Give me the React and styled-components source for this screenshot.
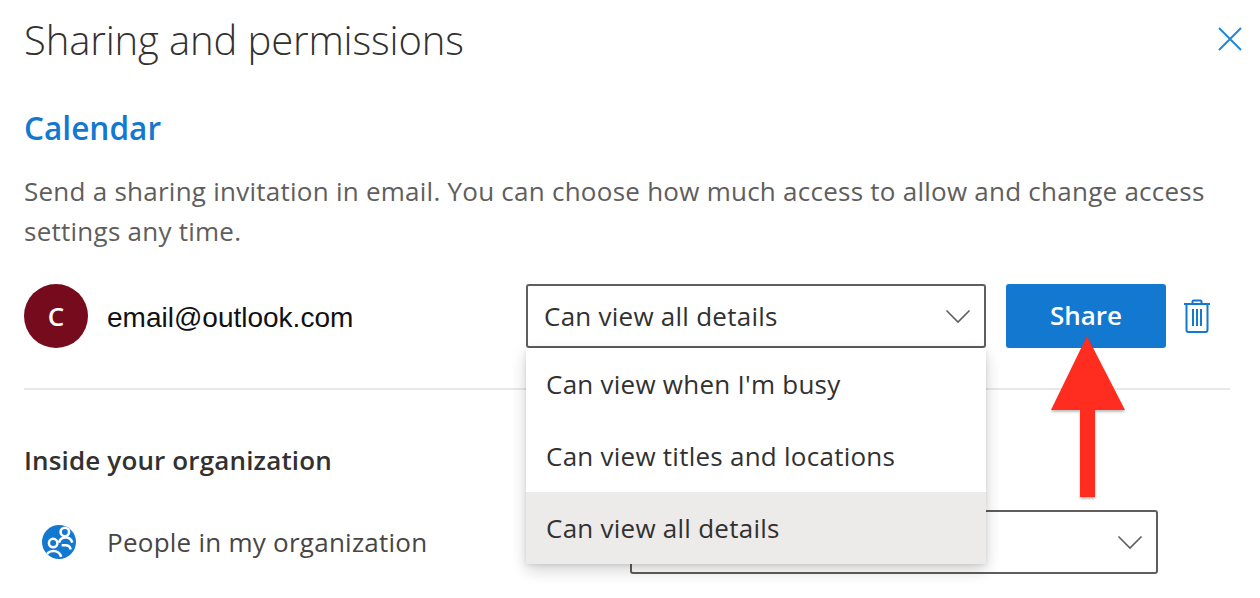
import React from "react";
import styled, { createGlobalStyle } from "styled-components";

const GlobalStyle = createGlobalStyle`
  html, body {
    margin: 0;
    padding: 0;
    background: #fff;
    overflow: hidden;
  }
  body {
    font-family: "Open Sans", "Noto Sans", sans-serif;
  }
`;

const Panel = styled.div`
  position: relative;
  width: 1260px;
  height: 598px;
  overflow: hidden;
  padding: 0 30px 0 24px;
  box-sizing: border-box;
`;

const Header = styled.header`
  display: flex;
  justify-content: space-between;
  align-items: center;
  height: 78px;
`;

const Title = styled.h1`
  margin: 0;
  font-size: 40px;
  font-weight: 300;
  color: #323130;
  letter-spacing: -0.13px;
`;

const CloseButton = styled.button`
  display: flex;
  width: 24px;
  height: 24px;
  padding: 0;
  margin-right: -12px;
  border: 0;
  background: none;
`;

const Heading = styled.h2`
  margin: 29px 0 0;
  font-size: 31.6px;
  line-height: 42px;
  font-weight: 600;
  color: #1378d0;
`;

const Description = styled.p`
  margin: 22px 0 0;
  font-size: 26px;
  line-height: 40px;
  color: #605e5c;
  letter-spacing: 0.25px;
`;

const InviteRow = styled.div`
  display: flex;
  align-items: center;
  height: 64px;
  margin-top: 33px;
`;

const Avatar = styled.div`
  display: flex;
  align-items: center;
  justify-content: center;
  width: 64px;
  height: 64px;
  flex: none;
  border-radius: 50%;
  background: #750b1c;
  color: #fff;
  font-size: 26px;
  font-weight: 600;
`;

const Email = styled.span`
  flex: 1;
  margin-left: 19px;
  padding-top: 4px;
  font-family: "Liberation Sans", Arial, sans-serif;
  font-size: 28px;
  color: #111;
`;

const Select = styled.div`
  display: flex;
  align-items: center;
  justify-content: space-between;
  box-sizing: border-box;
  width: ${(p) => p.$width}px;
  height: 64px;
  padding: 0 13px 0 16px;
  border: 2px solid #605e5c;
  border-radius: 3px;
  font-size: 26px;
  letter-spacing: 0.25px;
  color: #323130;
`;

const SelectSpacer = styled.span`
  flex: 1;
`;

const ShareButton = styled.button`
  width: 160px;
  height: 64px;
  margin-left: 20px;
  border: 0;
  border-radius: 3px;
  background: #1378d0;
  color: #fff;
  font-family: inherit;
  font-size: 26px;
  font-weight: 600;
  padding: 0 0 2px;
`;

const TrashButton = styled.button`
  display: flex;
  width: 28px;
  height: 34px;
  margin: 0 19px 0 17px;
  padding: 0;
  border: 0;
  background: none;
`;

const Divider = styled.hr`
  margin: 40px 0 0;
  width: 1206px;
  height: 2px;
  border: 0;
  background: #e9e8e7;
`;

const SubHeading = styled.h3`
  margin: 52px 0 0;
  font-size: 26px;
  line-height: 36px;
  font-weight: 600;
  color: #323130;
  letter-spacing: 0.15px;
`;

const OrgRow = styled.div`
  display: flex;
  align-items: center;
  height: 64px;
  margin-top: 32px;
  padding-left: 18px;
`;

const OrgLabel = styled.span`
  width: 523px;
  margin-left: 31px;
  font-size: 26px;
  letter-spacing: 0.25px;
  color: #484644;
`;

const Menu = styled.ul`
  position: absolute;
  left: 526px;
  top: 348px;
  width: 460px;
  margin: 0;
  padding: 0;
  list-style: none;
  background: #fff;
  border-radius: 2px;
  box-shadow: 0 6px 16px rgba(0, 0, 0, 0.18), 0 1px 4px rgba(0, 0, 0, 0.1);
`;

const MenuItem = styled.li`
  display: flex;
  align-items: center;
  height: 72px;
  padding-left: 20px;
  font-size: 26px;
  letter-spacing: 0.25px;
  color: #323130;
  background: ${(p) => (p.$selected ? "#edebe9" : "transparent")};
`;

const ArrowOverlay = styled.svg`
  position: absolute;
  left: 1046px;
  top: 332px;
  filter: drop-shadow(0 2px 1px rgba(0, 0, 0, 0.25));
`;

function Chevron() {
  return (
    <svg width="26" height="16" viewBox="0 0 26 16" fill="none">
      <path d="M1.5 2.5 13 14 24.5 2.5" stroke="#605e5c" strokeWidth="1.6" />
    </svg>
  );
}

function CloseIcon() {
  return (
    <svg width="24" height="24" viewBox="0 0 24 24" fill="none">
      <path d="M1 1 23 23M23 1 1 23" stroke="#1f86dc" strokeWidth="2" />
    </svg>
  );
}

function TrashIcon() {
  return (
    <svg width="28" height="34" viewBox="0 0 28 34" fill="none" stroke="#1378d0" strokeWidth="2">
      <path d="M1 5h26" />
      <path d="M9.5 5V2.5a1 1 0 0 1 1-1h7a1 1 0 0 1 1 1V5" />
      <path d="M3.5 5v26a2 2 0 0 0 2 2h17a2 2 0 0 0 2-2V5" />
      <path d="M10 10v17M14 10v17M18 10v17" />
    </svg>
  );
}

function PeopleIcon() {
  return (
    <svg width="34" height="34" viewBox="0 0 32 32">
      <defs>
        <clipPath id="org-disc">
          <circle cx="16" cy="16" r="16" />
        </clipPath>
      </defs>
      <circle cx="16" cy="16" r="16" fill="#1378d0" />
      <g fill="none" stroke="#fff" strokeWidth="2.4" clipPath="url(#org-disc)">
        <circle cx="21.5" cy="6.5" r="4" />
        <path d="M16 16.5a6.5 6.5 0 0 1 12.5 0" />
        <circle cx="10.5" cy="17" r="4" />
        <path d="M3.5 30a7.5 7.5 0 0 1 14.5 0" />
        <path d="M18.5 19h3.5a5 5 0 0 1 5 4" />
      </g>
    </svg>
  );
}

function RedArrow() {
  return (
    <ArrowOverlay width="84" height="172" viewBox="0 0 84 172">
      <path d="M41 4 79 78H49V165H34V78H5Z" fill="#ff2d1f" />
    </ArrowOverlay>
  );
}

export default function App() {
  return (
    <Panel>
      <GlobalStyle />
      <Header>
        <Title>Sharing and permissions</Title>
        <CloseButton aria-label="Close">
          <CloseIcon />
        </CloseButton>
      </Header>
      <Heading>Calendar</Heading>
      <Description>
        Send a sharing invitation in email. You can choose how much access to allow and change access settings any time.
      </Description>
      <InviteRow>
        <Avatar>C</Avatar>
        <Email>email@outlook.com</Email>
        <Select $width={460}>
          Can view all details
          <Chevron />
        </Select>
        <ShareButton>Share</ShareButton>
        <TrashButton aria-label="Remove">
          <TrashIcon />
        </TrashButton>
      </InviteRow>
      <Divider />
      <SubHeading>Inside your organization</SubHeading>
      <OrgRow>
        <PeopleIcon />
        <OrgLabel>People in my organization</OrgLabel>
        <Select $width={528}>
          <SelectSpacer />
          <Chevron />
        </Select>
      </OrgRow>
      <Menu>
        <MenuItem>Can view when I'm busy</MenuItem>
        <MenuItem>Can view titles and locations</MenuItem>
        <MenuItem $selected>Can view all details</MenuItem>
      </Menu>
      <RedArrow />
    </Panel>
  );
}
